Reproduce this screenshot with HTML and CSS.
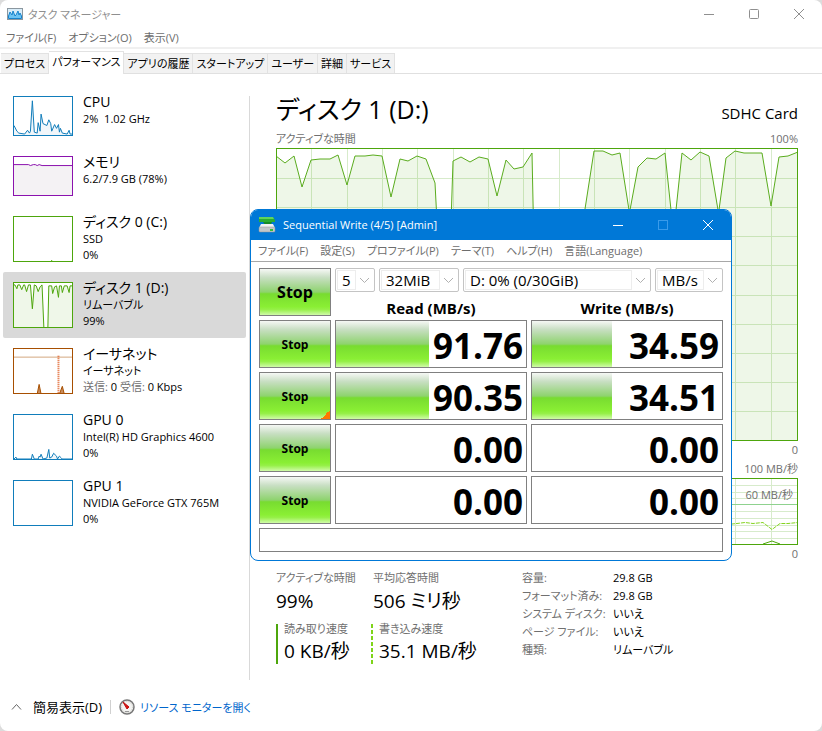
FILE: index.html
```html
<!DOCTYPE html>
<html lang="ja">
<head>
    <meta charset="UTF-8">
    <meta name="viewport" content="width=device-width, initial-scale=1.0">
    <title>タスク マネージャー</title>
    <link rel="stylesheet" href="styles.css">
</head>
<body>
    <div class="taskmgr">
        <header class="titlebar">
            <svg class="app-icon" width="16" height="12" viewBox="0 0 16 12">
                <rect x="0.5" y="0.5" width="15" height="11" fill="#d9edf9" stroke="#8b979f"/>
                <path d="M1.5 8L3 4L5 7L6 3L8 8L9 7L11 3L12 7L13 5L14.5 8V10.500H1.500Z" fill="#6cc3f3" stroke="#1683cc"/>
            </svg>
            <span class="title">タスク マネージャー</span>
            <button class="win-btn" aria-label="最小化"><svg width="12" height="12"><path d="M1 6.5H11"/></svg></button>
            <button class="win-btn" aria-label="最大化"><svg width="12" height="12"><rect x="1.5" y="1.5" width="9" height="9" rx="1"/></svg></button>
            <button class="win-btn" aria-label="閉じる"><svg width="12" height="12"><path d="M1 1L11 11M11 1L1 11"/></svg></button>
        </header>

        <nav class="menubar">
            <button>ファイル(F)</button>
            <button>オプション(O)</button>
            <button>表示(V)</button>
        </nav>

        <div class="tabs">
            <button class="tab">プロセス</button>
            <button class="tab active">パフォーマンス</button>
            <button class="tab">アプリの履歴</button>
            <button class="tab">スタートアップ</button>
            <button class="tab">ユーザー</button>
            <button class="tab">詳細</button>
            <button class="tab">サービス</button>
        </div>

        <div class="content">
            <aside class="sidebar">
                <button class="device">
                    <svg class="mini short blue" viewBox="0 0 60 40" preserveAspectRatio="none">
                        <path d="M-3 30H0L3 36L5 38L11 39L14 35L16 38L17 36L19 4L21 37L24 38L25 27L27 36L28 18L30 28L34 30L36 24L38 28L39 36L42 29L44 33L46 29L47 37L48 33L50 38L55 39L57 35L58 39H63V43H-3Z"/>
                    </svg>
                    <span class="info"><span class="name">CPU</span><span>2%&nbsp; 1.02 GHz</span></span>
                </button>
                <button class="device">
                    <svg class="mini short purple" viewBox="0 0 60 40" preserveAspectRatio="none">
                        <path d="M-3 8H15L17 9L20 8H22L24 9L26 8L29 9H63V43H-3Z"/>
                    </svg>
                    <span class="info"><span class="name">メモリ</span><span>6.2/7.9 GB (78%)</span></span>
                </button>
                <button class="device">
                    <svg class="mini green" viewBox="0 0 60 46" preserveAspectRatio="none">
                        <path d="M39 45V49"/>
                    </svg>
                    <span class="info"><span class="name">ディスク 0 (C:)</span><span>SSD</span><span>0%</span></span>
                </button>
                <button class="device selected">
                    <svg class="mini green" viewBox="0 0 60 46" preserveAspectRatio="none">
                        <path d="M-3 2H1L3 6L4 2L6 2L8 7L10 2L11 2L13 9L15 2L17 2L19 27L21 2L23 3L25 9L27 4L29 2L31 49H35L36 3L39 3L40 11L42 4L44 3L46 15L47 3L49 3L50 10L52 3L55 3L57 10L58 3H63V49H-3Z"/>
                    </svg>
                    <span class="info"><span class="name">ディスク 1 (D:)</span><span>リムーバブル</span><span>99%</span></span>
                </button>
                <button class="device">
                    <svg class="mini brown" viewBox="0 0 60 46" preserveAspectRatio="none">
                        <path class="level" d="M0 8.5H60"/>
                        <path class="sent" d="M46 7V46"/>
                        <path d="M24 47L26 37L28 47ZM47 47L50 39L52 47Z"/>
                    </svg>
                    <span class="info"><span class="name">イーサネット</span><span>イーサネット</span><span><i>送信:</i> 0 <i>受信:</i> 0 Kbps</span></span>
                </button>
                <button class="device">
                    <svg class="mini blue" viewBox="0 0 60 46" preserveAspectRatio="none">
                        <path d="M-3 46H0L2 44L3 46H18L19 41L21 46H25L26 43L27 44L28 41L30 46L34 45L36 36L37 45L39 44L41 40L44 43L45 46L47 43L49 45L50 46H63V49H-3Z"/>
                    </svg>
                    <span class="info"><span class="name">GPU 0</span><span>Intel(R) HD Graphics 4600</span><span>0%</span></span>
                </button>
                <button class="device">
                    <svg class="mini blue" viewBox="0 0 60 46" preserveAspectRatio="none"></svg>
                    <span class="info"><span class="name">GPU 1</span><span>NVIDIA GeForce GTX 765M</span><span>0%</span></span>
                </button>
            </aside>

            <main class="detail">
                <div class="heading">
                    <h1>ディスク 1 (D:)</h1>
                    <span class="model">SDHC Card</span>
                </div>
                <div class="scale"><span>アクティブな時間</span><span>100%</span></div>
                <svg class="chart active-time" viewBox="0 0 522 293" preserveAspectRatio="none">
                    <path class="grid" d="M35.5 0V293M71.5 0V293M106.5 0V293M141.5 0V293M177.5 0V293M212.5 0V293M247.5 0V293M283.5 0V293M318.5 0V293M353.5 0V293M389.5 0V293M424.5 0V293M459.5 0V293M495.5 0V293M0 30.5H522M0 59.5H522M0 88.5H522M0 117.5H522M0 147.5H522M0 176.5H522M0 205.5H522M0 234.5H522M0 263.5H522"/>
                    <path class="area" d="M0 8L9 15L18 8L26 39L35 12L44 11H54L62 7L71 37L79 8H89L97 7L106 8L115 49L124 11L132 13L141 8L150 11L159 35L162 93L168 293L177 13L185 9L194 14L203 9L212 11L221 48L230 12L238 21L247 19L256 5L262 293H275L309 61L318 3H327L336 7L344 5L353 62H354L362 19L371 10L380 11L389 5L395 62L397 110L400 62L406 5L415 12L424 4L433 8L442 62H443L450 10L459 3L468 5H486L495 58L503 9L512 8L522 4V293H0Z"/>
                    <rect class="frame" x="0.5" y="0.5" width="521" height="292"/>
                </svg>
                <div class="scale zero"><span></span><span>0</span></div>
                <div class="scale"><span></span><span>100 MB/秒</span></div>
                <div class="transfer">
                    <svg class="chart" viewBox="0 0 522 67" preserveAspectRatio="none">
                        <path class="grid" d="M35.5 0V67M71.5 0V67M106.5 0V67M141.5 0V67M177.5 0V67M212.5 0V67M247.5 0V67M283.5 0V67M318.5 0V67M353.5 0V67M389.5 0V67M424.5 0V67M459.5 0V67M495.5 0V67M0 7.5H522M0 14.5H522M0 20.5H522M0 33.5H522M0 40.5H522M0 47.5H522M0 53.5H522M0 60.5H522"/>
                        <path class="limit" d="M0 26.5H522"/>
                        <path class="write" d="M440 45L456 46L461 45.5L469 44.5L477 45.5L487 44.5L496 51.5L504 45.5H512L522 44.5"/>
                        <path class="read" d="M487 66L496 63L504 66"/>
                        <rect class="frame" x="0.5" y="0.5" width="521" height="66"/>
                    </svg>
                    <span class="limit-label">60 MB/秒</span>
                </div>
                <div class="scale zero"><span></span><span>0</span></div>

                <div class="stats">
                    <div class="counters">
                        <div class="counter"><span>アクティブな時間</span><b>99%</b></div>
                        <div class="counter"><span>平均応答時間</span><b>506 ミリ秒</b></div>
                        <div class="counter keyed"><span>読み取り速度</span><b>0 KB/秒</b></div>
                        <div class="counter keyed dashed"><span>書き込み速度</span><b>35.1 MB/秒</b></div>
                    </div>
                    <dl class="props">
                        <dt>容量:</dt><dd>29.8 GB</dd>
                        <dt>フォーマット済み:</dt><dd>29.8 GB</dd>
                        <dt>システム ディスク:</dt><dd>いいえ</dd>
                        <dt>ページ ファイル:</dt><dd>いいえ</dd>
                        <dt>種類:</dt><dd>リムーバブル</dd>
                    </dl>
                </div>
            </main>
        </div>

        <footer class="bottom">
            <button class="fewer">
                <svg width="11" height="8"><path d="M1 6.5L5.5 1.5L10 6.5" fill="none" stroke="#666"/></svg>
                簡易表示(D)
            </button>
            <a class="resmon" href="#">
                <svg width="16" height="16" viewBox="0 0 16 16">
                    <circle cx="8" cy="8" r="7" fill="#f4f4f2" stroke="#777" stroke-width="1.5"/>
                    <circle cx="8" cy="8" r="5.5" fill="none" stroke="#c9c9c4" stroke-dasharray="1 1"/>
                    <path d="M4 3L10 8L8 10Z" fill="#d11" stroke="#c01010"/>
                    <path d="M6 12.5H10" stroke="#999"/>
                </svg>
                リソース モニターを開く
            </a>
        </footer>
    </div>

    <section class="cdm">
        <header class="titlebar cdm-title">
            <svg width="18" height="18" viewBox="0 0 18 18">
                <path d="M1 1H15L17 4V6H1Z" fill="#29ad32"/>
                <path d="M1 1H15L16 3H1Z" fill="#5fd45c"/>
                <path d="M5 6H14L12 10H8Z" fill="#178c27"/>
                <path d="M3 8H15L17 12H1Z" fill="#f2f2f2"/>
                <rect x="1" y="11" width="16" height="5" rx="1" fill="#c3c7ca" stroke="#8c9195" stroke-width="0.5"/>
                <rect x="12" y="13" width="3" height="2" fill="#35c03a"/>
            </svg>
            <span class="title">Sequential Write (4/5) [Admin]</span>
            <button class="win-btn" aria-label="最小化"><svg width="12" height="12"><path d="M1 6.5H11"/></svg></button>
            <button class="win-btn" aria-label="最大化" disabled><svg width="12" height="12"><rect x="1.5" y="1.5" width="9" height="9"/></svg></button>
            <button class="win-btn" aria-label="閉じる"><svg width="12" height="12"><path d="M1 1L11 11M11 1L1 11"/></svg></button>
        </header>
        <nav class="menubar cdm-menu">
            <button>ファイル(F)</button>
            <button>設定(S)</button>
            <button>プロファイル(P)</button>
            <button>テーマ(T)</button>
            <button>ヘルプ(H)</button>
            <button>言語(Language)</button>
        </nav>
        <div class="bench">
            <button class="stop all">Stop</button>
            <div class="options">
                <label class="combo"><select aria-label="回数"><option>5</option></select><svg width="18" height="8"><path d="M4 2L8.5 6.5L13 2"/></svg></label>
                <label class="combo"><select aria-label="サイズ"><option>32MiB</option></select><svg width="18" height="8"><path d="M4 2L8.5 6.5L13 2"/></svg></label>
                <label class="combo"><select aria-label="ドライブ"><option>D: 0% (0/30GiB)</option></select><svg width="18" height="8"><path d="M4 2L8.5 6.5L13 2"/></svg></label>
                <label class="combo"><select aria-label="単位"><option>MB/s</option></select><svg width="18" height="8"><path d="M4 2L8.5 6.5L13 2"/></svg></label>
                <div class="col-head"><span>Read (MB/s)</span><span>Write (MB/s)</span></div>
            </div>

            <button class="stop">Stop</button>
            <div class="meter"><div class="bar" style="width: 49%"></div><span>91.76</span></div>
            <div class="meter"><div class="bar" style="width: 42%"></div><span>34.59</span></div>

            <button class="stop marked">Stop</button>
            <div class="meter"><div class="bar" style="width: 49%"></div><span>90.35</span></div>
            <div class="meter"><div class="bar" style="width: 42%"></div><span>34.51</span></div>

            <button class="stop">Stop</button>
            <div class="meter"><span>0.00</span></div>
            <div class="meter"><span>0.00</span></div>

            <button class="stop">Stop</button>
            <div class="meter"><span>0.00</span></div>
            <div class="meter"><span>0.00</span></div>

            <input class="comment" type="text" aria-label="コメント">
        </div>
    </section>
</body>
</html>
```

FILE: styles.css
```css
* {
    box-sizing: border-box;
}

body {
    margin: 0;
    background: #dcdcdc;
    color: #000;
    font-family: "Open Sans", "Noto Sans CJK JP", sans-serif;
    font-size: 11px;
    font-feature-settings: "palt";
}

button, select, input {
    font: inherit;
    font-feature-settings: inherit;
    color: inherit;
    margin: 0;
    padding: 0;
    border: none;
    background: none;
}

.taskmgr {
    min-height: 100vh;
    display: flex;
    flex-direction: column;
    background: #fff;
    border-radius: 8px;
}

/* title bars */
.titlebar {
    display: flex;
    align-items: center;
    height: 27px;
    padding: 0 1px 0 7px;
    color: #8f8f8f;
}

.title {
    flex: 1;
    margin-left: 5px;
}

.win-btn {
    width: 45px;
    height: 27px;
    display: flex;
    align-items: center;
    justify-content: center;
}

.win-btn svg {
    fill: none;
    stroke: #8f8f8f;
}

.menubar {
    display: flex;
    align-items: center;
    gap: 12px;
    height: 22px;
    padding: 0 6px;
    color: #6d6d6d;
    border-bottom: 2px solid #f0f0f0;
}

/* tabs */
.tabs {
    display: flex;
    align-items: flex-end;
    height: 25px;
    padding-left: 1px;
    border-bottom: 1px solid #e0e0e0;
}

.tab {
    height: 20px;
    padding: 0 3px 2px;
    background: #f2f2f2;
    border: 1px solid #e2e2e2;
    border-width: 1px 1px 0 0;
}

.tab.active {
    height: 23px;
    margin-bottom: -1px;
    padding-bottom: 5px;
    background: #fff;
}

/* device list */
.content {
    flex: 1;
    display: flex;
}

.sidebar {
    width: 247px;
    padding: 12px 1px 0 3px;
}

.device {
    display: flex;
    width: 100%;
    gap: 10px;
    padding: 7px 10px 2px;
    border-radius: 2px;
    text-align: left;
    line-height: 16px;
}

.device.selected {
    background: #d9d9d9;
}

.mini {
    flex: none;
    width: 60px;
    height: 46px;
    margin: 3px 0 8px;
    background: #fff;
    border: 1px solid;
}

.mini.short {
    height: 40px;
}

.mini path {
    stroke: currentColor;
    vector-effect: non-scaling-stroke;
}

.blue {
    color: #117dbb;
    fill: #f1f6fa;
}

.purple {
    color: #8b12ae;
    fill: #f4f2f4;
}

.green {
    color: #4da60c;
    fill: #eff7e9;
}

.brown {
    color: #a74f01;
    fill: #c98d5e;
}

.mini .level {
    stroke: #d3a780;
}

.mini .sent {
    stroke: #e0622a;
    stroke-width: 2px;
    stroke-dasharray: 1 1;
}

.info {
    display: flex;
    flex-direction: column;
    white-space: nowrap;
}

.name {
    font-size: 14px;
    line-height: 18px;
}

.info i {
    font-style: normal;
    color: #707070;
}

/* main pane */
.detail {
    flex: 1;
    margin: 22px 0 0 2px;
    padding: 0 24px 0 26px;
    border-left: 1px solid #d9d9d9;
}

.heading {
    display: flex;
    align-items: center;
    justify-content: space-between;
    height: 34px;
}

h1 {
    margin: 0 0 8px;
    font-size: 25px;
    font-weight: 400;
    line-height: 26px;
}

.model {
    font-size: 15px;
}

.scale {
    display: flex;
    justify-content: space-between;
    height: 18px;
    line-height: 18px;
    color: #707070;
}

.scale.zero {
    height: 19px;
}

.chart {
    display: block;
    width: 100%;
    height: 67px;
    fill: none;
}

.active-time {
    height: 293px;
}

.grid {
    stroke: #d7ebcb;
}

.area {
    fill: #4da60c18;
    stroke: #5aac1e;
}

.frame {
    stroke: #4da60c;
}

.limit {
    stroke: #8fd28f;
}

.write {
    stroke: #85d420;
    stroke-dasharray: 4 1;
}

.read {
    stroke: #4da60c;
}

.transfer {
    position: relative;
}

.limit-label {
    position: absolute;
    top: 8px;
    right: 5px;
    line-height: 18px;
    color: #707070;
}

.stats {
    display: flex;
    padding-top: 5px;
}

.counters {
    display: grid;
    grid-template-columns: 97px 1fr;
    align-content: start;
    row-gap: 6px;
    width: 246px;
}

.counter {
    display: flex;
    flex-direction: column;
    line-height: 18px;
    color: #707070;
}

.counter b {
    font-size: 19px;
    font-weight: 400;
    line-height: 28px;
    color: #000;
    white-space: nowrap;
}

.keyed {
    height: 40px;
    margin-top: 3px;
    padding-left: 8px;
    background: linear-gradient(#4da60c, #4da60c) left / 2px 100% no-repeat;
    line-height: 10px;
}

.keyed b {
    margin-top: 3px;
}

.dashed {
    margin-left: -2px;
    background: repeating-linear-gradient(#7fd41a 0 4px, transparent 4px 6px) left / 2px 100% no-repeat;
}

.props {
    display: grid;
    grid-template-columns: 91px auto;
    align-content: start;
    margin: 0;
    line-height: 18px;
    white-space: nowrap;
}

.props dt {
    color: #707070;
}

.props dd {
    margin: 0;
}

/* footer */
.bottom {
    display: flex;
    align-items: center;
    height: 51px;
    padding: 2px 11px 0;
}

.fewer, .resmon {
    display: flex;
    align-items: center;
}

.fewer {
    gap: 11px;
    padding-right: 8px;
    border-right: 1px solid #d0d0d0;
    font-size: 13px;
    line-height: 14px;
}

.resmon {
    gap: 5px;
    padding-left: 8px;
    color: #0066cc;
    text-decoration: none;
}

/* benchmark window, floats over the task manager */
.cdm {
    position: absolute;
    left: 250px;
    top: 209px;
    width: 482px;
    overflow: hidden;
    background: #fff;
    border: 1px solid #0078d7;
    border-radius: 8px;
}

.cdm-title {
    height: 30px;
    padding-bottom: 1px;
    background: #0078d7;
    color: #fff;
}

.cdm-title .title {
    margin-left: 7px;
}

.cdm-title .win-btn svg {
    stroke: #fff;
}

.cdm-title .win-btn:disabled svg {
    stroke: #3a9bea;
}

.cdm-menu {
    padding: 0 7px 2px;
    border-bottom: 1px solid #a8a8a8;
}

.bench {
    display: grid;
    grid-template-columns: 72px 1fr 1fr;
    grid-template-rows: repeat(5, 48px) 24px;
    gap: 4px;
    padding: 6px 8px 8px;
}

.options {
    grid-column: span 2;
    display: grid;
    grid-template-columns: 40px 80px 1fr 68px;
    grid-template-rows: 24px 24px;
    column-gap: 4px;
}

.combo {
    display: flex;
    align-items: center;
    border: 1px solid #c4c4c4;
    border-radius: 2px;
    font-size: 15px;
}

.combo select {
    flex: 1;
    min-width: 0;
    height: 20px;
    margin-left: 1px;
    padding-left: 4px;
    appearance: none;
    border: 1px solid #ededed;
    line-height: 18px;
}

.combo svg {
    fill: none;
    stroke: #b0b0b0;
}

.col-head {
    grid-column: span 4;
    display: grid;
    grid-template-columns: 1fr 1fr;
    column-gap: 4px;
    padding-top: 6px;
    font-size: 15px;
    font-weight: 700;
    line-height: 20px;
    text-align: center;
}

.stop, .bar {
    background: linear-gradient(#f6f8f5 0%, #c9dfc4 18%, #8ed36e 50%, #78dc30 54%, #8aef34 82%, #96f048 88%, #d0fba8 100%);
}

.stop {
    border: 1px solid #808080;
    font-size: 12px;
    font-weight: 700;
}

.stop.all {
    font-size: 16px;
}

.marked {
    background: linear-gradient(135deg, transparent 50%, #ff7800 50%) right bottom / 9px 9px no-repeat,
        linear-gradient(#f6f8f5 0%, #c9dfc4 18%, #8ed36e 50%, #78dc30 54%, #8aef34 82%, #96f048 88%, #d0fba8 100%);
}

.meter {
    display: grid;
    grid-template-rows: 46px;
    border: 1px solid #808080;
    font-size: 35px;
    font-weight: 700;
    line-height: 42px;
    text-align: right;
}

.meter > * {
    grid-area: 1 / 1;
}

.meter span {
    padding: 4px 3px 0 0;
}

.comment {
    grid-column: span 3;
    height: 24px;
    padding: 0 4px;
    border: 1px solid #808080;
}
```
